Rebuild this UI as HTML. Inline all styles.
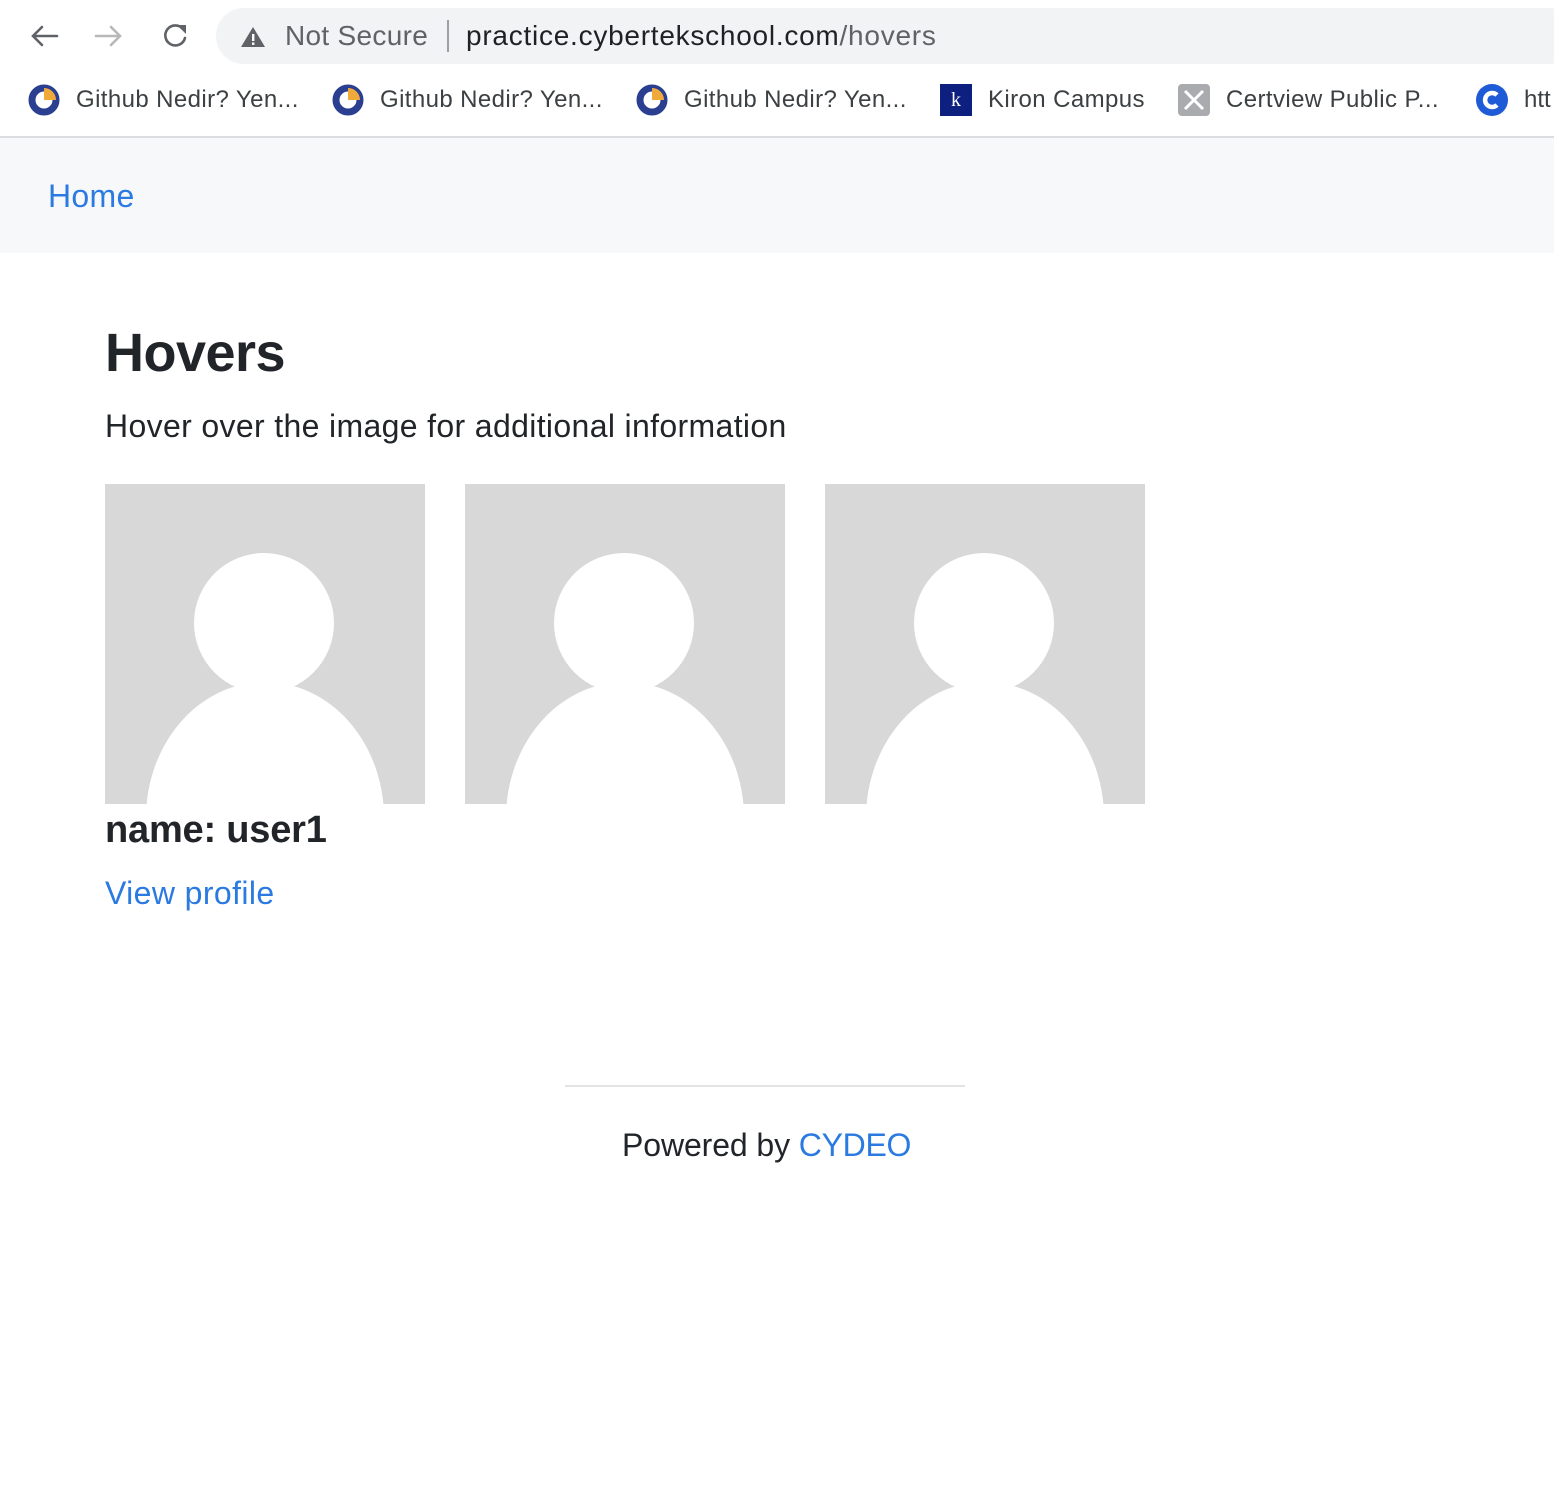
<!DOCTYPE html>
<html><head><style>
body{margin:0;width:1554px;height:1494px;background:#fff;font-family:"Liberation Sans",sans-serif;position:relative;overflow:hidden}
.a{position:absolute;white-space:nowrap}
</style></head><body>
<svg class="a" style="left:26px;top:20px" width="180" height="32" viewBox="0 0 180 32">
<g fill="none" stroke-width="2.6" stroke-linecap="round">
<path d="M31 16H7M16 7l-9 9 9 9" stroke="#5f6368"/>
<path d="M70 16h24M85 7l9 9-9 9" stroke="#b8b8b8"/>
<path d="M157 9a10 10 0 1 0 2 9" stroke="#5f6368"/>
</g>
<path d="M151 5l9 0 0 9z" fill="#5f6368"/>
</svg>
<div class="a" style="left:216px;top:8px;width:1360px;height:56px;border-radius:28px;background:#f1f3f4"></div>
<svg class="a" style="left:240px;top:25px" width="26" height="24"><path d="M13 2L25 22H1Z" fill="#5f6368"/><rect x="12" y="9" width="2.4" height="7" fill="#fff"/><rect x="12" y="17.5" width="2.4" height="2.4" fill="#fff"/></svg>
<div class="a" style="left:285px;top:20px;font-size:28px;color:#5f6368;letter-spacing:0.3px">Not Secure</div>
<div class="a" style="left:447px;top:20px;width:2px;height:32px;background:#9aa0a6"></div>
<div class="a" style="left:466px;top:20px;font-size:28px;color:#202124;letter-spacing:0.75px">practice.cybertekschool.com<span style="color:#5f6368">/hovers</span></div>
<svg class="a" style="left:28px;top:84px" width="32" height="32"><circle cx="16" cy="16" r="12" fill="none" stroke="#2a3f8f" stroke-width="7"/><path d="M16 4a12 12 0 0 1 12 12H16z" fill="#f0a93b"/></svg>
<div class="a" style="left:76px;top:86px;font-size:24px;color:#3c4043;letter-spacing:0.4px">Github Nedir? Yen...</div>
<svg class="a" style="left:332px;top:84px" width="32" height="32"><circle cx="16" cy="16" r="12" fill="none" stroke="#2a3f8f" stroke-width="7"/><path d="M16 4a12 12 0 0 1 12 12H16z" fill="#f0a93b"/></svg>
<div class="a" style="left:380px;top:86px;font-size:24px;color:#3c4043;letter-spacing:0.4px">Github Nedir? Yen...</div>
<svg class="a" style="left:636px;top:84px" width="32" height="32"><circle cx="16" cy="16" r="12" fill="none" stroke="#2a3f8f" stroke-width="7"/><path d="M16 4a12 12 0 0 1 12 12H16z" fill="#f0a93b"/></svg>
<div class="a" style="left:684px;top:86px;font-size:24px;color:#3c4043;letter-spacing:0.4px">Github Nedir? Yen...</div>
<div class="a" style="left:940px;top:84px;width:32px;height:32px;background:#0d1f7f;color:#fff;font-family:'Liberation Serif',serif;font-size:20px;text-align:center;line-height:32px">k</div>
<div class="a" style="left:988px;top:86px;font-size:24px;color:#3c4043;letter-spacing:0.4px">Kiron Campus</div>
<svg class="a" style="left:1178px;top:84px" width="32" height="32"><rect width="32" height="32" rx="4" fill="#a9abae"/><path d="M7 7l18 18M25 7L7 25" stroke="#fff" stroke-width="3"/></svg>
<div class="a" style="left:1226px;top:86px;font-size:24px;color:#3c4043;letter-spacing:0.4px">Certview Public P...</div>
<svg class="a" style="left:1476px;top:84px" width="32" height="32"><circle cx="16" cy="16" r="16" fill="#1f5bd6"/><path d="M21 11a7 7 0 1 0 0 10" fill="none" stroke="#fff" stroke-width="4.5"/></svg>
<div class="a" style="left:1524px;top:86px;font-size:24px;color:#3c4043">htt</div>
<div class="a" style="left:0;top:136px;width:1554px;height:2px;background:#dadce0"></div>
<div class="a" style="left:0;top:138px;width:1554px;height:115px;background:#f7f8fa"></div>
<div class="a" style="left:48px;top:178px;font-size:32px;color:#2a7ae2;letter-spacing:0.3px">Home</div>
<div class="a" style="left:105px;top:322px;font-size:54px;font-weight:bold;color:#212529;letter-spacing:-0.5px">Hovers</div>
<div class="a" style="left:105px;top:408px;font-size:32px;color:#212529;letter-spacing:0.35px">Hover over the image for additional information</div>
<svg class="a" style="left:105px;top:484px" width="1040" height="320">
<defs><g id="u"><rect width="320" height="320" fill="#d8d8d8"/><ellipse cx="160" cy="334" rx="119" ry="136" fill="#fff"/><circle cx="159" cy="139" r="70" fill="#fff"/></g></defs>
<use href="#u"/><use href="#u" x="360"/><use href="#u" x="720"/>
</svg>
<div class="a" style="left:105px;top:809px;font-size:38px;font-weight:bold;color:#212529;letter-spacing:-0.2px">name: user1</div>
<div class="a" style="left:105px;top:875px;font-size:32px;color:#2a7ae2;letter-spacing:0.4px">View profile</div>
<div class="a" style="left:565px;top:1085px;width:400px;height:2px;background:#e3e3e3"></div>
<div class="a" style="left:622px;top:1127px;font-size:32px;color:#212529;letter-spacing:-0.1px">Powered by <span style="color:#2a7ae2;letter-spacing:-0.3px">CYDEO</span></div>
</body></html>
